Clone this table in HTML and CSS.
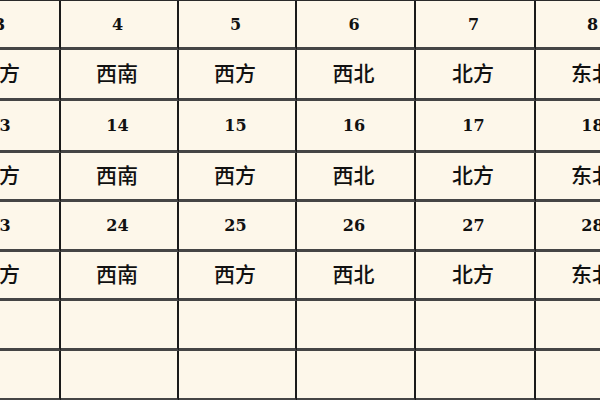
FILE: index.html
```html
<!DOCTYPE html>
<html>
<head>
<meta charset="utf-8">
<link rel="stylesheet" href="styles.css">
</head>
<body>
<div class="sheet">
  <div class="cell num">3</div><div class="cell num">4</div><div class="cell num">5</div><div class="cell num">6</div><div class="cell num">7</div><div class="cell num">8</div>
  <div class="cell dir">南方</div><div class="cell dir">西南</div><div class="cell dir">西方</div><div class="cell dir">西北</div><div class="cell dir">北方</div><div class="cell dir">东北</div>
  <div class="cell num">13</div><div class="cell num">14</div><div class="cell num">15</div><div class="cell num">16</div><div class="cell num">17</div><div class="cell num">18</div>
  <div class="cell dir">南方</div><div class="cell dir">西南</div><div class="cell dir">西方</div><div class="cell dir">西北</div><div class="cell dir">北方</div><div class="cell dir">东北</div>
  <div class="cell num">23</div><div class="cell num">24</div><div class="cell num">25</div><div class="cell num">26</div><div class="cell num">27</div><div class="cell num">28</div>
  <div class="cell dir">南方</div><div class="cell dir">西南</div><div class="cell dir">西方</div><div class="cell dir">西北</div><div class="cell dir">北方</div><div class="cell dir">东北</div>
  <div class="cell"></div><div class="cell"></div><div class="cell"></div><div class="cell"></div><div class="cell"></div><div class="cell"></div>
  <div class="cell"></div><div class="cell"></div><div class="cell"></div><div class="cell"></div><div class="cell"></div><div class="cell"></div>
</div>
</body>
</html>
```
FILE: styles.css
```css
html, body {
  margin: 0;
  padding: 0;
  background: #fdf7ea;
  overflow: hidden;
}
.sheet {
  display: grid;
  grid-template-columns: 118px 118px 118px 119px 120px 118px;
  grid-template-rows: 49px 51px 52px 49px 50px 49px 50px 50px;
  margin-left: -57px;
  width: 711px;
  border-top: 2px solid #2a2a2a;
  margin-top: -1px;
  background: #fdf7ea;
}
.cell {
  box-sizing: border-box;
  border-right: 2px solid #1a1a1a;
  border-bottom: 3px solid #454545;
  display: flex;
  align-items: center;
  justify-content: center;
  color: #111;
}
.num {
  font-family: "DejaVu Serif", serif;
  font-weight: bold;
  font-size: 16px;
  padding-right: 3px;
}
.dir {
  font-family: "Noto Sans CJK SC", sans-serif;
  font-size: 21px;
  font-weight: 500;
  padding-bottom: 4px;
  padding-right: 4px;
}
```
